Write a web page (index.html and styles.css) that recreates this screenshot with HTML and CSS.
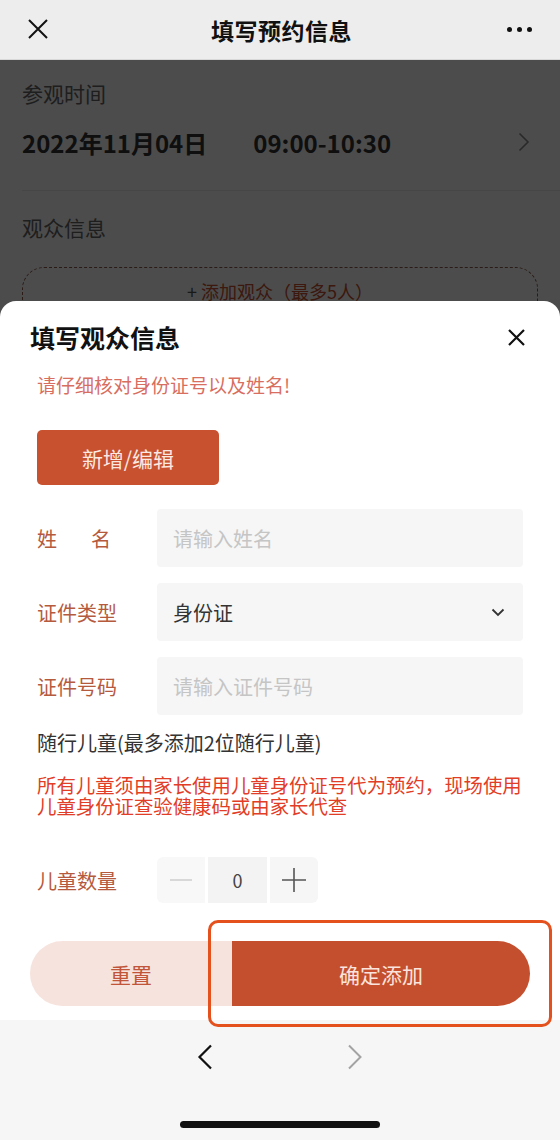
FILE: index.html
```html
<!DOCTYPE html>
<html lang="zh-CN">
<head>
    <meta charset="UTF-8">
    <meta name="viewport" content="width=device-width, initial-scale=1.0">
    <title>填写预约信息</title>
    <link rel="stylesheet" href="styles.css">
</head>
<body>
<div class="phone">
    <div class="topbar">
        <svg class="top-close" width="20" height="20" viewBox="0 0 20 20"><path d="M1 1L19 19M19 1L1 19" stroke="#111" stroke-width="2" fill="none"/></svg>
        <div class="top-title">填写预约信息</div>
        <div class="top-more"><span></span><span></span><span></span></div>
    </div>

    <div class="webview">
        <div class="page">
            <div class="sec-label">参观时间</div>
            <div class="date-row">
                <span class="date">2022年11月04日</span>
                <span class="time">09:00-10:30</span>
                <svg class="date-arrow" width="12" height="20" viewBox="0 0 12 20"><path d="M1.5 1.5L10 10L1.5 18.5" stroke="#8a8a8a" stroke-width="1.6" fill="none"/></svg>
            </div>
            <div class="sec-label viewer-label">观众信息</div>
            <div class="add-box">+ <span>添加观众（最多5人）</span></div>
        </div>
        <div class="mask"></div>

        <div class="sheet">
            <div class="sheet-head">
                <div class="sheet-title">填写观众信息</div>
                <svg width="17" height="17" viewBox="0 0 17 17"><path d="M1 1L16 16M16 1L1 16" stroke="#111" stroke-width="2.2" fill="none"/></svg>
            </div>
            <p class="warn">请仔细核对身份证号以及姓名!</p>
            <button class="edit-btn">新增/编辑</button>

            <div class="form-row">
                <div class="label label-split"><span>姓</span><span>名</span></div>
                <div class="field placeholder">请输入姓名</div>
            </div>
            <div class="form-row">
                <div class="label">证件类型</div>
                <div class="field select">
                    <span>身份证</span>
                    <svg width="14" height="9" viewBox="0 0 14 9"><path d="M1.5 1.5L7 7L12.5 1.5" stroke="#333" stroke-width="1.8" fill="none"/></svg>
                </div>
            </div>
            <div class="form-row">
                <div class="label">证件号码</div>
                <div class="field placeholder">请输入证件号码</div>
            </div>

            <div class="kids-title">随行儿童(最多添加2位随行儿童)</div>
            <p class="kids-note">所有儿童须由家长使用儿童身份证号代为预约，现场使用儿童身份证查验健康码或由家长代查</p>

            <div class="kids-row">
                <div class="label">儿童数量</div>
                <div class="stepper">
                    <div class="step minus"><span></span></div>
                    <div class="step value">0</div>
                    <div class="step plus">
                        <svg width="24" height="24" viewBox="0 0 24 24"><path d="M12 0V24M0 12H24" stroke="#555" stroke-width="1.6" fill="none"/></svg>
                    </div>
                </div>
            </div>

            <div class="actions">
                <button class="btn-reset">重置</button>
                <button class="btn-confirm">确定添加</button>
                <div class="highlight"></div>
            </div>
        </div>
    </div>

    <div class="browser-bar">
        <div class="nav-arrows">
            <svg width="16" height="26" viewBox="0 0 16 26"><path d="M14 1.5L2.5 13L14 24.5" stroke="#111" stroke-width="2.2" fill="none"/></svg>
            <svg width="16" height="26" viewBox="0 0 16 26"><path d="M2 1.5L13.5 13L2 24.5" stroke="#a3a3a3" stroke-width="2" fill="none"/></svg>
        </div>
        <div class="home-bar"></div>
    </div>
</div>
</body>
</html>
```

FILE: styles.css
```css
body {
    margin: 0;
    font-family: "Noto Sans CJK SC", "Noto Sans", sans-serif;
    background-color: #fff;
    color: #333;
}
.phone {
    width: 560px;
    height: 1140px;
    display: flex;
    flex-direction: column;
    overflow: hidden;
}

/* top navigation */
.topbar {
    height: 59px;
    flex: none;
    display: flex;
    align-items: center;
    justify-content: space-between;
    padding: 0 28px;
    background-color: #ededed;
    border-bottom: 1px solid #d8d8d8;
}
.top-close { margin-top: -1px; }
.top-title {
    font-size: 23px;
    font-weight: 700;
    color: #111;
    letter-spacing: 0.5px;
    padding-left: 8px;
}
.top-more {
    display: flex;
    gap: 5px;
}
.top-more span {
    width: 5px;
    height: 5px;
    border-radius: 50%;
    background-color: #111;
}

/* page under the sheet */
.webview {
    flex: 1;
    position: relative;
    z-index: 1;
}
.page {
    padding: 18px 22px 0;
}
.sec-label {
    font-size: 21px;
    line-height: 30px;
    color: #666;
}
.date-row {
    display: flex;
    align-items: center;
    height: 34px;
    margin-top: 17px;
    padding-bottom: 31px;
    border-bottom: 1px solid #ececec;
    margin-right: -22px;
    padding-right: 30px;
}
.date, .time {
    font-size: 24px;
    font-weight: 700;
    color: #333;
}
.time { margin-left: 46px; }
.date-arrow { margin-left: auto; }
.viewer-label { margin-top: 21px; }
.add-box {
    margin-top: 25px;
    height: 60px;
    border: 1.5px dashed #8d5a4e;
    border-radius: 22px;
    text-align: center;
    font-size: 18px;
    line-height: 46px;
    color: #555;
}
.add-box span { color: #c9502f; }
.mask {
    position: absolute;
    inset: 0;
    background-color: rgba(0, 0, 0, 0.7);
}

/* bottom sheet */
.sheet {
    position: absolute;
    left: 0;
    right: 0;
    bottom: 0;
    background-color: #fff;
    border-radius: 16px 16px 0 0;
    padding: 20px 37px 14px;
}
.sheet-head {
    display: flex;
    align-items: center;
    justify-content: space-between;
    height: 32px;
    margin: 0 -2px 0 -7px;
}
.sheet-title {
    font-size: 25px;
    font-weight: 700;
    color: #111;
}
.warn {
    margin: 19px 0 0;
    font-size: 19px;
    line-height: 26px;
    color: #d86e5f;
}
.edit-btn {
    display: block;
    margin-top: 32px;
    width: 182px;
    height: 55px;
    border: none;
    border-radius: 5px;
    background-color: #c8512f;
    color: #fbe8e2;
    font-family: inherit;
    font-size: 21px;
}
.form-row {
    display: flex;
    align-items: center;
    margin-top: 16px;
}
.edit-btn + .form-row { margin-top: 24px; }
.label {
    width: 120px;
    flex: none;
    font-size: 20px;
    color: #b65a3e;
}
.label-split {
    display: flex;
    justify-content: space-between;
    width: 74px;
    margin-right: 46px;
}
.field {
    flex: 1;
    height: 58px;
    display: flex;
    align-items: center;
    padding: 0 16px;
    background-color: #f6f6f6;
    border-radius: 4px;
    font-size: 20px;
}
.placeholder { color: #c5c5c5; }
.select {
    justify-content: space-between;
    color: #333;
    padding-right: 18px;
}
.kids-title {
    margin-top: 15px;
    font-size: 20px;
    line-height: 26px;
    color: #333;
}
.kids-note {
    margin: 18px 0 0;
    width: 490px;
    font-size: 19.4px;
    line-height: 21px;
    color: #e23d26;
}
.kids-row {
    display: flex;
    align-items: center;
    margin-top: 41px;
}
.stepper {
    display: flex;
    gap: 3px;
    border-radius: 6px;
    overflow: hidden;
}
.step {
    height: 46px;
    display: flex;
    align-items: center;
    justify-content: center;
}
.minus {
    width: 48px;
    background-color: #f8f8f8;
}
.minus span {
    width: 22px;
    height: 1.5px;
    background-color: #d8d8d8;
}
.value {
    width: 59px;
    background-color: #f3f3f3;
    font-size: 18px;
    color: #444;
}
.plus {
    width: 48px;
    background-color: #f6f6f6;
}

/* action buttons */
.actions {
    position: relative;
    display: flex;
    margin: 38px -7px 0;
}
.actions button {
    height: 65px;
    border: none;
    font-family: inherit;
    font-size: 21px;
}
.btn-reset {
    width: 202px;
    border-radius: 33px 0 0 33px;
    background-color: #f7e3dd;
    color: #c0553a;
}
.btn-confirm {
    flex: 1;
    border-radius: 0 33px 33px 0;
    background-color: #c44f2e;
    color: #fbe4dd;
}
.highlight {
    position: absolute;
    left: 178px;
    top: -21px;
    right: -22px;
    bottom: -21px;
    border: 3.5px solid #e5511d;
    border-radius: 10px;
}

/* browser bottom bar */
.browser-bar {
    height: 120px;
    flex: none;
    background-color: #f6f6f6;
}
.nav-arrows {
    display: flex;
    justify-content: center;
    gap: 134px;
    padding-top: 24px;
}
.home-bar {
    width: 200px;
    height: 7px;
    border-radius: 4px;
    background-color: #111;
    margin: 51px auto 0;
}
```
